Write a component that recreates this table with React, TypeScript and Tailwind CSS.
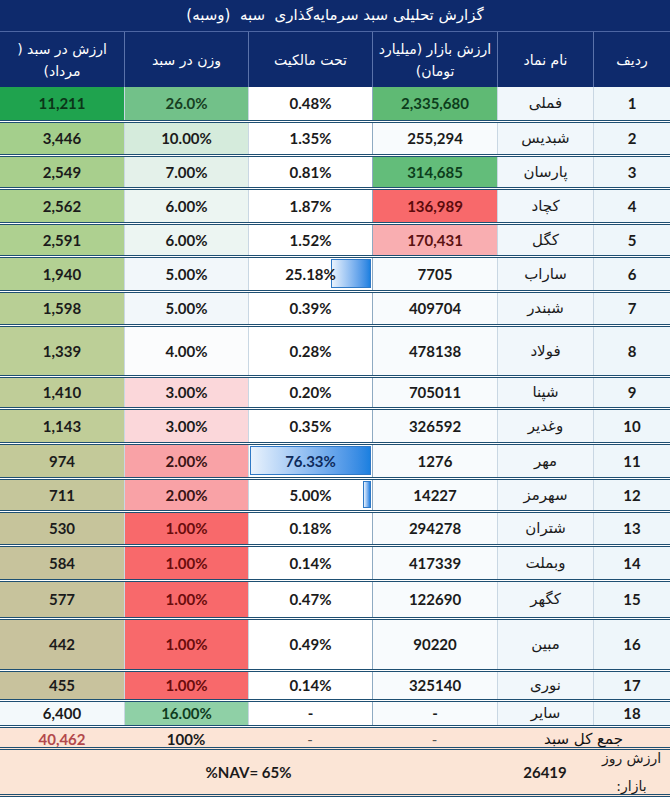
import React from 'react';

type RowData = {
  n: string;
  name: string;
  mv: string;
  mvC: string;
  own: string;
  bar?: number;
  w: string;
  wC: string;
  val: string;
  valC: string;
  h: string;
};

const COLS = 'grid grid-cols-[77px_96px_125px_124px_124px_124px]';
const NUM = "font-['Lato',sans-serif] font-bold text-[15px]";
const FA = "font-['DejaVu_Sans',sans-serif]";
const CELL = 'flex items-center justify-center';
const LINE = 'border-l border-[#c9d7e3]';
const ROWLINE = 'border-b-[3px] border-double border-[#1e4f72]';

const rows: RowData[] = [
  { n: '1', name: 'فملی', mv: '2,335,680', mvC: 'bg-[#5fba74] text-[#0d3d1c]', own: '0.48%', w: '26.0%', wC: 'bg-[#72c189] text-[#173f22]', val: '11,211', valC: 'bg-[#1fa34e] text-[#0b3518]', h: 'h-[36px]' },
  { n: '2', name: 'شبدیس', mv: '255,294', mvC: 'bg-[#f8fbfd] text-[#1b1b1b]', own: '1.35%', w: '10.00%', wC: 'bg-[#d5ebdc] text-[#1b1b1b]', val: '3,446', valC: 'bg-[#a4cf8c] text-[#1b1b1b]', h: 'h-[34px]' },
  { n: '3', name: 'پارسان', mv: '314,685', mvC: 'bg-[#63bd7a] text-[#0d3d1c]', own: '0.81%', w: '7.00%', wC: 'bg-[#e4f1ea] text-[#1b1b1b]', val: '2,549', valC: 'bg-[#a8cf8d] text-[#1b1b1b]', h: 'h-[33px]' },
  { n: '4', name: 'کچاد', mv: '136,989', mvC: 'bg-[#f8696b] text-[#5c0b0b]', own: '1.87%', w: '6.00%', wC: 'bg-[#ecf5f2] text-[#1b1b1b]', val: '2,562', valC: 'bg-[#abd08f] text-[#1b1b1b]', h: 'h-[35px]' },
  { n: '5', name: 'کگل', mv: '170,431', mvC: 'bg-[#f9aeb1] text-[#5c1212]', own: '1.52%', w: '6.00%', wC: 'bg-[#ecf5f2] text-[#1b1b1b]', val: '2,591', valC: 'bg-[#aed090] text-[#1b1b1b]', h: 'h-[33px]' },
  { n: '6', name: 'ساراب', mv: '7705', mvC: 'bg-[#f8fbfd] text-[#1b1b1b]', own: '25.18%', bar: 25.18, w: '5.00%', wC: 'bg-[#f2f7fa] text-[#1b1b1b]', val: '1,940', valC: 'bg-[#b3d093] text-[#1b1b1b]', h: 'h-[35px]' },
  { n: '7', name: 'شبندر', mv: '409704', mvC: 'bg-[#f8fbfd] text-[#1b1b1b]', own: '0.39%', w: '5.00%', wC: 'bg-[#f2f7fa] text-[#1b1b1b]', val: '1,598', valC: 'bg-[#b8cf95] text-[#1b1b1b]', h: 'h-[34px]' },
  { n: '8', name: 'فولاد', mv: '478138', mvC: 'bg-[#f8fbfd] text-[#1b1b1b]', own: '0.28%', w: '4.00%', wC: 'bg-[#fbfcfd] text-[#1b1b1b]', val: '1,339', valC: 'bg-[#bccf97] text-[#1b1b1b]', h: 'h-[51px]' },
  { n: '9', name: 'شپنا', mv: '705011', mvC: 'bg-[#f8fbfd] text-[#1b1b1b]', own: '0.20%', w: '3.00%', wC: 'bg-[#fbd7da] text-[#1b1b1b]', val: '1,410', valC: 'bg-[#bfcd98] text-[#1b1b1b]', h: 'h-[32px]' },
  { n: '10', name: 'وغدیر', mv: '326592', mvC: 'bg-[#f8fbfd] text-[#1b1b1b]', own: '0.35%', w: '3.00%', wC: 'bg-[#fbd7da] text-[#1b1b1b]', val: '1,143', valC: 'bg-[#c0cd98] text-[#1b1b1b]', h: 'h-[35px]' },
  { n: '11', name: 'مهر', mv: '1276', mvC: 'bg-[#f8fbfd] text-[#1b1b1b]', own: '76.33%', bar: 76.33, w: '2.00%', wC: 'bg-[#f9a2a6] text-[#3a1414]', val: '974', valC: 'bg-[#c3c999] text-[#1b1b1b]', h: 'h-[35px]' },
  { n: '12', name: 'سهرمز', mv: '14227', mvC: 'bg-[#f8fbfd] text-[#1b1b1b]', own: '5.00%', bar: 5, w: '2.00%', wC: 'bg-[#f9a2a6] text-[#3a1414]', val: '711', valC: 'bg-[#c5c69b] text-[#1b1b1b]', h: 'h-[33px]' },
  { n: '13', name: 'شتران', mv: '294278', mvC: 'bg-[#f8fbfd] text-[#1b1b1b]', own: '0.18%', w: '1.00%', wC: 'bg-[#f8696b] text-[#6a0c0c]', val: '530', valC: 'bg-[#c6c49b] text-[#1b1b1b]', h: 'h-[34px]' },
  { n: '14', name: 'وبملت', mv: '417339', mvC: 'bg-[#f8fbfd] text-[#1b1b1b]', own: '0.14%', w: '1.00%', wC: 'bg-[#f8696b] text-[#6a0c0c]', val: '584', valC: 'bg-[#c7c39c] text-[#1b1b1b]', h: 'h-[35px]' },
  { n: '15', name: 'کگهر', mv: '122690', mvC: 'bg-[#f8fbfd] text-[#1b1b1b]', own: '0.47%', w: '1.00%', wC: 'bg-[#f8696b] text-[#6a0c0c]', val: '577', valC: 'bg-[#c7c39c] text-[#1b1b1b]', h: 'h-[38px]' },
  { n: '16', name: 'مبین', mv: '90220', mvC: 'bg-[#f8fbfd] text-[#1b1b1b]', own: '0.49%', w: '1.00%', wC: 'bg-[#f8696b] text-[#6a0c0c]', val: '442', valC: 'bg-[#c8c29d] text-[#1b1b1b]', h: 'h-[52px]' },
  { n: '17', name: 'نوری', mv: '325140', mvC: 'bg-[#f8fbfd] text-[#1b1b1b]', own: '0.14%', w: '1.00%', wC: 'bg-[#f8696b] text-[#6a0c0c]', val: '455', valC: 'bg-[#c8c29d] text-[#1b1b1b]', h: 'h-[30px]' },
  { n: '18', name: 'سایر', mv: '-', mvC: 'bg-[#f8fbfd] text-[#1b1b1b]', own: '-', w: '16.00%', wC: 'bg-[#8fd0a6] text-[#0f3d1f]', val: '6,400', valC: 'bg-[#f3f9fb] text-[#1b1b1b]', h: 'h-[26px]' },
];

function Row({ r }: { r: RowData }) {
  return (
    <div className={`${COLS} ${ROWLINE} ${r.h}`}>
      <div className={`${CELL} ${LINE} bg-[#eef6fa] ${NUM} text-[#1b1b1b]`}>{r.n}</div>
      <div className={`${CELL} ${LINE} bg-[#f1f7fb] ${FA} text-[15px] text-[#1b1b1b]`}>{r.name}</div>
      <div className={`${CELL} border-l border-[#8eaac2] ${r.mvC} ${NUM}`}>{r.mv}</div>
      <div className={`relative ${CELL} ${LINE} bg-white ${NUM} ${r.bar && r.bar > 50 ? 'text-[#0e2b5c]' : 'text-[#1b1b1b]'}`}>
        {r.bar !== undefined && (
          <div
            className="absolute right-[1px] top-[1px] bottom-[2px] border border-[#2f79c6] bg-linear-to-r from-[#e9f2fc] to-[#1a80e0]"
            style={{ width: `${(r.bar / 76.33) * 121}px` }}
          />
        )}
        <span className="relative">{r.own}</span>
      </div>
      <div className={`${CELL} ${LINE} ${r.wC} ${NUM}`}>{r.w}</div>
      <div className={`${CELL} ${r.valC} ${NUM}`}>{r.val}</div>
    </div>
  );
}

export default function App() {
  return (
    <div dir="rtl" className="w-[670px] h-[800px] bg-white overflow-hidden">
      <div className={`h-[32px] bg-[#0e2a6c] border-b border-[#4d66a3] ${CELL} ${FA} text-[15px] text-white`}>
        گزارش تحلیلی سبد سرمایه‌گذاری&nbsp; سبه&nbsp; (وسبه)
      </div>
      <div className={`${COLS} h-[55px] bg-[#0e2a6c] ${FA} text-[14px] leading-[22px] text-white text-center`}>
        <div className={`${CELL} border-l border-[#5a72aa]`}>ردیف</div>
        <div className={`${CELL} border-l border-[#5a72aa]`}>نام نماد</div>
        <div className={`${CELL} border-l border-[#5a72aa]`}>
          ارزش بازار (میلیارد
          <br />
          تومان)
        </div>
        <div className={`${CELL} border-l border-[#5a72aa]`}>تحت مالکیت</div>
        <div className={`${CELL} border-l border-[#5a72aa]`}>وزن در سبد</div>
        <div className={CELL}>
          ارزش در سبد (
          <br />
          مرداد)
        </div>
      </div>
      {rows.map((r) => (
        <Row key={r.n} r={r} />
      ))}
      <div className={`${COLS} h-[22px] bg-[#fce4d6] ${ROWLINE}`}>
        <div className={`col-span-2 ${CELL} ${FA} text-[15px] text-[#111]`}>جمع کل سبد</div>
        <div className={`${CELL} ${NUM} font-normal text-[#555]`}>-</div>
        <div className={`${CELL} ${NUM} font-normal text-[#555]`}>-</div>
        <div className={`${CELL} ${NUM} text-[#1b1b1b]`}>100%</div>
        <div className={`${CELL} ${NUM} text-[#b3494c]`}>40,462</div>
      </div>
      <div className={`${COLS} h-[47px] bg-[#fbe5d6] ${ROWLINE}`}>
        <div className={`flex flex-col items-center justify-between ${FA} text-[14px] leading-[16px] text-[#1b1b1b]`}>
          <span>ارزش روز</span>
          <span>بازار:</span>
        </div>
        <div className={`${CELL} ${NUM} text-[#1b1b1b]`}>26419</div>
        <div className={`col-span-4 ${CELL} ${NUM} text-[#1b1b1b]`}>
          <span dir="ltr">%NAV= 65%</span>
        </div>
      </div>
    </div>
  );
}
